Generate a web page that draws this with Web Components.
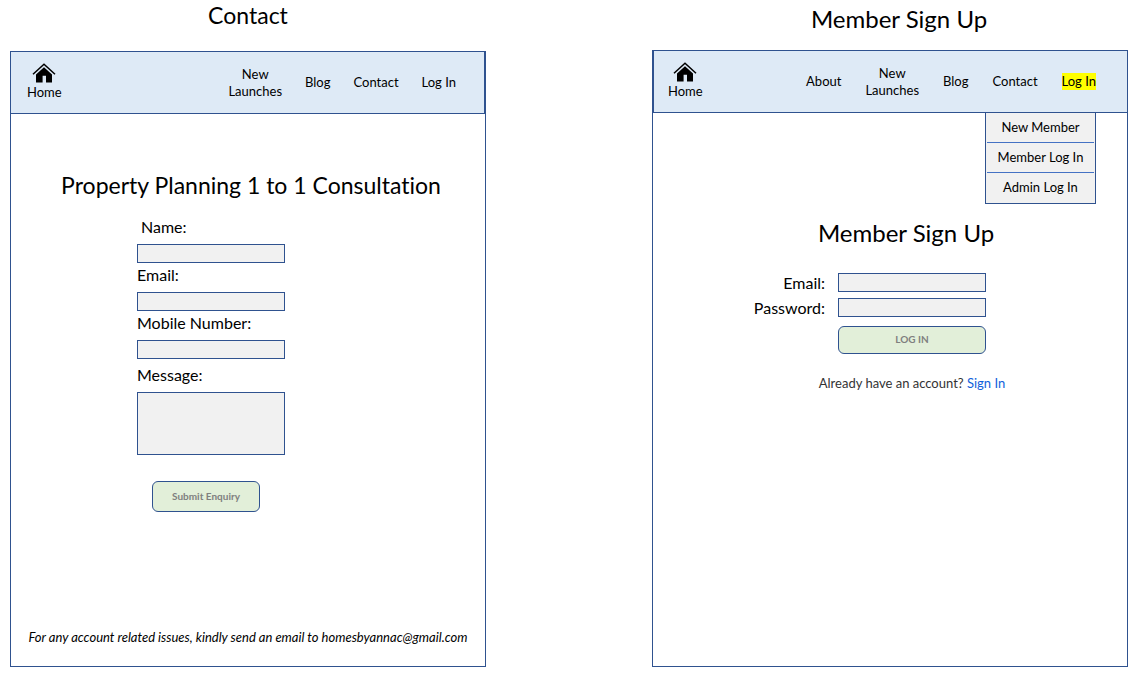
<!DOCTYPE html>
<html lang="en">
<head>
<meta charset="utf-8">
<meta name="viewport" content="width=device-width, initial-scale=1">
<title>Wireframes: Contact and Member Sign Up</title>
<style>
  :root {
    --line: #2f528f;
    --bar: #deeaf6;
    --field: #f1f1f1;
    --go: #e2efd9;
  }
  body {
    margin: 0;
    background: #fff;
    color: #000;
    font-family: Lato, "Open Sans", sans-serif;
    font-variant-ligatures: none;
  }
</style>
</head>
<body>
<wire-board></wire-board>

<script>
const define = (name, html, setup) => {
  const template = document.createElement('template');
  template.innerHTML = html;
  customElements.define(name, class extends HTMLElement {
    constructor() {
      super();
      this.attachShadow({ mode: 'open' }).append(template.content.cloneNode(true));
    }
    connectedCallback() {
      if (setup) setup(this, this.shadowRoot);
    }
  });
};

define('home-link', `
  <style>
    :host { display: block; padding-bottom: 2px; }
    a { display: flex; flex-direction: column; align-items: center; color: inherit; text-decoration: none; font-size: 13px; line-height: 18px; }
    svg { display: block; width: 24px; height: 20px; }
  </style>
  <a href="#home">
    <svg viewBox="0 0 24 20" aria-hidden="true">
      <path d="M1 11.2 12 1.2 23 11.2" fill="none" stroke="#000" stroke-width="1.5"/>
      <path d="M12 4.2 20 11.4V19.6H14V12.8H10.6V19.6H4V11.4Z" fill="#000"/>
    </svg>
    <span>Home</span>
  </a>`);

define('nav-item', `
  <style>
    :host { display: block; text-align: center; }
    a { color: inherit; text-decoration: none; font-size: 13px; line-height: 17px; display: block; }
    :host([active]) a { background: #ff0; }
  </style>
  <a href="#"><slot></slot></a>`);

define('nav-bar', `
  <style>
    :host { display: block; position: relative; background: var(--bar); border-bottom: 1px solid var(--line); }
    nav { display: flex; align-items: center; height: 61px; padding: 0 var(--nav-end) 0 var(--nav-start); }
    .items { display: flex; align-items: center; gap: var(--nav-gap); margin-left: auto; }
    ::slotted(drop-menu) { position: absolute; top: 100%; right: var(--nav-end); }
  </style>
  <nav>
    <home-link></home-link>
    <div class="items"><slot></slot></div>
  </nav>
  <slot name="menu"></slot>`);

define('drop-menu', `
  <style>
    :host { display: block; box-sizing: border-box; width: 111px; margin-top: 1px; padding: 0 1px 1px; background: var(--field); border: 1px solid var(--line); border-top: 0; }
  </style>
  <slot></slot>`);

define('menu-entry', `
  <style>
    :host { display: block; text-align: center; }
    :host(:not(:last-child)) { border-bottom: 1px solid #4472c4; }
    a { display: block; color: inherit; text-decoration: none; font-size: 13px; line-height: 29px; white-space: nowrap; }
  </style>
  <a href="#"><slot></slot></a>`);

define('page-heading', `
  <style>
    :host { display: block; text-align: center; }
    h2 { margin: 0; font-weight: 400; font-size: var(--heading-size); line-height: 28px; }
  </style>
  <h2><slot></slot></h2>`);

define('form-field', `
  <style>
    :host { display: flex; flex-direction: column; gap: 7px; }
    :host([inline]) { flex-direction: row; justify-content: flex-end; align-items: center; gap: 13px; height: 19px; }
    :host([indent]) label { padding-left: 4px; }
    label { font-size: 16px; line-height: 20px; white-space: nowrap; }
    input, textarea { display: block; box-sizing: border-box; width: 148px; height: 19px; margin: 0; padding: 0 4px; border: 1px solid var(--line); border-radius: 0; background: var(--field); font: inherit; font-size: 13px; resize: none; outline: 0; }
    textarea { height: 63px; }
  </style>
  <label for="control"></label>`, (host, root) => {
    const type = host.getAttribute('type');
    const control = document.createElement(type === 'textarea' ? 'textarea' : 'input');
    if (type !== 'textarea') control.type = type;
    control.id = 'control';
    root.querySelector('label').textContent = host.getAttribute('label');
    root.append(control);
  });

define('action-button', `
  <style>
    :host { display: block; }
    button { display: block; box-sizing: border-box; width: 100%; height: var(--button-height, 31px); padding: 0 0 2px; border: 1px solid var(--line); border-radius: 6px; background: var(--go); color: #7f7f7f; font: 700 10px/14px Lato, sans-serif; }
  </style>
  <button type="button"><slot></slot></button>`);

define('wire-screen', `
  <style>
    :host { display: flex; flex-direction: column; }
    h1 { margin: 0; font-weight: 400; font-size: var(--heading-size); line-height: 28px; text-align: center; }
    .frame { display: flex; flex-direction: column; flex: 1; border: 1px solid var(--line); }
  </style>
  <h1 part="title"></h1>
  <section class="frame"><slot></slot></section>`, (host, root) => {
    root.querySelector('h1').textContent = host.getAttribute('heading');
  });

define('contact-form', `
  <style>
    :host { display: block; padding-top: 57px; }
    page-heading { margin: 0 0 18px 6px; }
    form { display: flex; flex-direction: column; gap: 2px; width: 148px; margin-left: 126px; }
    form-field[type=textarea] { margin-top: 4px; }
    action-button { width: 108px; margin: 24px 0 0 15px; }
  </style>
  <page-heading>Property Planning 1 to 1 Consultation</page-heading>
  <form>
    <form-field indent type="text" label="Name:"></form-field>
    <form-field type="email" label="Email:"></form-field>
    <form-field type="tel" label="Mobile Number:"></form-field>
    <form-field type="textarea" label="Message:"></form-field>
    <action-button>Submit Enquiry</action-button>
  </form>`);

define('sign-up-form', `
  <style>
    :host { display: block; padding-top: 106px; }
    page-heading { margin: 0 0 26px 32px; }
    form { display: flex; flex-direction: column; gap: 6px; width: 234px; margin-left: 99px; }
    action-button { --button-height: 28px; width: 148px; margin: 3px 0 0 auto; }
    p { margin: 19px 0 0 44px; text-align: center; color: #333; font-size: 13px; line-height: 20px; }
    a { color: #1161db; text-decoration: none; }
  </style>
  <page-heading>Member Sign Up</page-heading>
  <form>
    <form-field inline type="email" label="Email:"></form-field>
    <form-field inline type="password" label="Password:"></form-field>
    <action-button>LOG IN</action-button>
  </form>
  <p>Already have an account? <a href="#">Sign In</a></p>`);

define('wire-board', `
  <style>
    :host { display: grid; grid-template-columns: 1fr 1fr; column-gap: 166px; box-sizing: border-box; min-height: 100vh; padding: 0 10px 10px; }
    .contact { --heading-size: 23px; --nav-start: 16px; --nav-end: 28px; --nav-gap: 23px; }
    .signup { --heading-size: 24px; --nav-start: 14px; --nav-end: 31px; --nav-gap: 24px; }
    .contact::part(title) { padding: 1px 0 22px; }
    .signup::part(title) { padding: 5px 0 17px 18px; }
    .contact nav-bar { border-right: 1px solid var(--line); }
    .signup nav-bar { border-left: 1px solid var(--line); }
    footer { margin-top: auto; padding-bottom: 19px; text-align: center; font-style: italic; font-size: 13px; line-height: 20px; }
  </style>
  <wire-screen class="contact" heading="Contact">
    <nav-bar>
      <nav-item>New<br>Launches</nav-item>
      <nav-item>Blog</nav-item>
      <nav-item>Contact</nav-item>
      <nav-item>Log In</nav-item>
    </nav-bar>
    <contact-form></contact-form>
    <footer>For any account related issues, kindly send an email to homesbyannac@gmail.com</footer>
  </wire-screen>
  <wire-screen class="signup" heading="Member Sign Up">
    <nav-bar>
      <nav-item>About</nav-item>
      <nav-item>New<br>Launches</nav-item>
      <nav-item>Blog</nav-item>
      <nav-item>Contact</nav-item>
      <nav-item active>Log In</nav-item>
      <drop-menu slot="menu">
        <menu-entry>New Member</menu-entry>
        <menu-entry>Member Log In</menu-entry>
        <menu-entry>Admin Log In</menu-entry>
      </drop-menu>
    </nav-bar>
    <sign-up-form></sign-up-form>
  </wire-screen>`);
</script>
</body>
</html>
